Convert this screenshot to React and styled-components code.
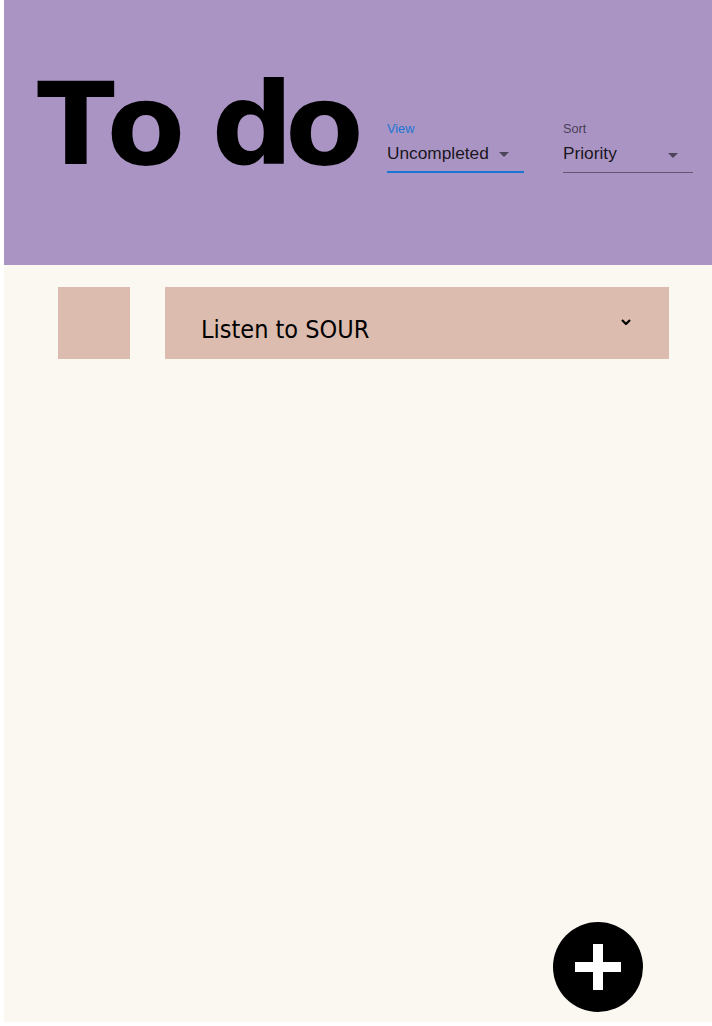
import React, { useState } from 'react';
import styled, { createGlobalStyle } from 'styled-components';

const GlobalStyle = createGlobalStyle`
  html, body {
    margin: 0;
    padding: 0;
    background: #ffffff;
  }
`;

const tasks = [{ id: 1, title: 'Listen to SOUR' }];

export default function App() {
  const [view] = useState('Uncompleted');
  const [sort] = useState('Priority');

  return (
    <>
      <GlobalStyle />
      <Page>
        <Header>
          <Title>To do</Title>
          <Controls>
            <Field width="137px">
              <Label focused>View</Label>
              <SelectBox focused>
                <Value>{view}</Value>
                <Arrow viewBox="0 0 24 24">
                  <path d="M7 10l5 5 5-5z" />
                </Arrow>
              </SelectBox>
            </Field>
            <Field width="130px">
              <Label>Sort</Label>
              <SelectBox>
                <Value>{sort}</Value>
                <Arrow viewBox="0 0 24 24">
                  <path d="M7 10l5 5 5-5z" />
                </Arrow>
              </SelectBox>
            </Field>
          </Controls>
        </Header>

        <List>
          {tasks.map((t) => (
            <Row key={t.id}>
              <Check />
              <TaskCard>
                <TaskTitle>{t.title}</TaskTitle>
                <Chevron viewBox="0 0 10 6">
                  <polyline points="1,1 5,5 9,1" />
                </Chevron>
              </TaskCard>
            </Row>
          ))}
        </List>

        <Fab aria-label="add">
          <svg width="46" height="46" viewBox="0 0 46 46">
            <rect x="0" y="18" width="46" height="10" fill="#fff" />
            <rect x="18" y="0" width="10" height="46" fill="#fff" />
          </svg>
        </Fab>
      </Page>
    </>
  );
}

const Page = styled.div`
  position: relative;
  margin-left: 4px;
  height: 1022px;
  background: #fbf8f1;
  overflow: hidden;
`;

const Header = styled.header`
  height: 265px;
  box-sizing: border-box;
  background: #aa94c4;
  display: flex;
  align-items: flex-start;
  padding: 68px 19px 0 33px;
`;

const Title = styled.h1`
  margin: 0;
  flex-shrink: 0;
  white-space: nowrap;
  font-family: "DejaVu Sans", sans-serif;
  font-weight: bold;
  font-size: 114px;
  line-height: 1;
  font-kerning: none;
  letter-spacing: -8px;
  word-spacing: 3px;
  color: #000;
`;

const Controls = styled.div`
  margin-left: auto;
  margin-top: 52px;
  display: flex;
  gap: 39px;
`;

const Field = styled.div`
  width: ${(p) => p.width};
  display: flex;
  flex-direction: column;
  font-family: "Liberation Sans", Arial, sans-serif;
`;

const Label = styled.label`
  font-size: 12.75px;
  line-height: 17px;
  color: ${(p) => (p.focused ? '#1976d2' : 'rgba(0, 0, 0, 0.6)')};
`;

const SelectBox = styled.div`
  position: relative;
  padding: 5px 24px ${(p) => (p.focused ? '6px' : '7px')} 0;
  border-bottom: ${(p) => (p.focused ? '2px solid #1976d2' : '1px solid rgba(0, 0, 0, 0.42)')};
`;

const Value = styled.div`
  font-size: 17.3px;
  line-height: 23px;
  color: rgba(0, 0, 0, 0.87);
  white-space: nowrap;
`;

const Arrow = styled.svg`
  position: absolute;
  right: 8px;
  top: calc(50% - 12px);
  width: 24px;
  height: 24px;
  fill: rgba(0, 0, 0, 0.54);
`;

const List = styled.div`
  display: flex;
  flex-direction: column;
  gap: 16px;
  padding: 22px 43px 0 54px;
`;

const Row = styled.div`
  display: flex;
  gap: 35px;
`;

const Check = styled.div`
  width: 72px;
  height: 72px;
  flex-shrink: 0;
  background: #dcbcaf;
`;

const TaskCard = styled.div`
  flex: 1;
  height: 72px;
  box-sizing: border-box;
  background: #dcbcaf;
  display: flex;
  align-items: flex-start;
  justify-content: space-between;
  padding: 28px 38px 0 36px;
`;

const TaskTitle = styled.span`
  font-family: "DejaVu Sans Condensed", "DejaVu Sans", sans-serif;
  font-stretch: condensed;
  font-size: 25px;
  color: #000;
`;

const Chevron = styled.svg`
  width: 10px;
  height: 6px;
  margin-top: 4px;
  fill: none;
  stroke: #000;
  stroke-width: 2.2;
`;

const Fab = styled.button`
  position: absolute;
  right: 69px;
  bottom: 10px;
  width: 90px;
  height: 90px;
  border-radius: 50%;
  border: 0;
  padding: 0;
  background: #000;
  display: flex;
  align-items: center;
  justify-content: center;
  cursor: pointer;
`;
